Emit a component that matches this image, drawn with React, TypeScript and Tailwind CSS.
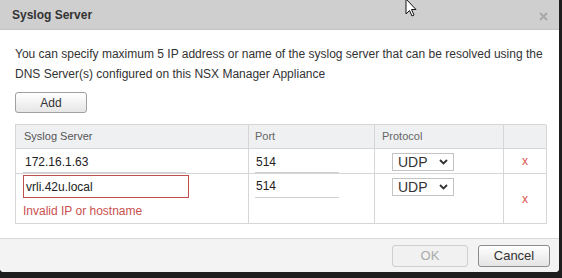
import React from 'react';

const font = { fontFamily: '"Liberation Sans", Arial, sans-serif' };

function Chevron() {
  return (
    <svg width="9" height="6" viewBox="0 0 9 6" className="shrink-0">
      <path d="M1 1 L4.5 4.5 L8 1" fill="none" stroke="#333" strokeWidth="1.8" />
    </svg>
  );
}

function ProtocolSelect({ className = '' }: { className?: string }) {
  return (
    <div
      className={`w-[62px] h-[18px] border border-[#c4c4c4] bg-white flex items-center justify-between pl-[5px] pr-[5px] text-[14px] leading-none text-[#333] ${className}`}
    >
      <span>UDP</span>
      <Chevron />
    </div>
  );
}

function RemoveX() {
  return <span className="text-[12px] leading-none text-[#d9534f]">x</span>;
}

export default function App() {
  return (
    <div className="w-[562px] h-[278px] bg-[#1e1e1e] relative overflow-hidden" style={font}>
      <div className="w-[559px] h-[272px] bg-white flex flex-col rounded-b-[4px] overflow-hidden">
        {/* title bar */}
        <div className="h-[30px] shrink-0 bg-[#cfcfcf] border-b border-[#c4c4c4] flex items-center justify-between pl-[12px] pr-[11px]">
          <span className="text-[12px] font-bold text-[#333]">Syslog Server</span>
          <svg width="9" height="9" viewBox="0 0 9 9" className="mt-[3px]">
            <path d="M1 1 L8 8 M8 1 L1 8" stroke="#a8a8a8" strokeWidth="2" />
          </svg>
        </div>

        {/* body */}
        <div className="flex-1 px-[15px] pt-[14px] text-[12px] text-[#333]">
          <p className="leading-[20px]">
            You can specify maximum 5 IP address or name of the syslog server that can be resolved using the
            <br />
            DNS Server(s) configured on this NSX Manager Appliance
          </p>
          <button className="mt-[8px] w-[72px] h-[21px] rounded-[3px] border border-[#a0a0a0] bg-gradient-to-b from-white to-[#e6e6e6] text-[12px] text-[#333]">
            Add
          </button>

          <div className="mt-[11px] w-[531px] border-l border-t border-[#d6d6d6] grid grid-cols-[233px_126px_129px_43px]">
            {/* header */}
            <div className="h-[24px] bg-[#eef0f2] border-r border-b border-[#d6d6d6] flex items-center pl-[8px] text-[11px] text-[#555]">
              Syslog Server
            </div>
            <div className="h-[24px] bg-[#eef0f2] border-r border-b border-[#d6d6d6] flex items-center pl-[6px] text-[11px] text-[#666]">
              Port
            </div>
            <div className="h-[24px] bg-[#eef0f2] border-r border-b border-[#d6d6d6] flex items-center pl-[7px] text-[11px] text-[#666]">
              Protocol
            </div>
            <div className="h-[24px] bg-[#eef0f2] border-r border-b border-[#d6d6d6]" />

            {/* row 1 */}
            <div className="h-[25px] border-r border-b border-[#d6d6d6] pl-[7px] pt-[2px]">
              <div className="w-[163px] h-[22px] border-b border-[#cfcfcf] flex items-center pl-[2px] text-[12px] text-[#222]">
                172.16.1.63
              </div>
            </div>
            <div className="h-[25px] border-r border-b border-[#d6d6d6] pl-[6px] pt-[2px]">
              <div className="w-[84px] h-[22px] border-b border-[#cfcfcf] flex items-center pl-[1px] text-[12px] text-[#222]">
                514
              </div>
            </div>
            <div className="h-[25px] border-r border-b border-[#d6d6d6] pl-[17px] pt-[4px]">
              <ProtocolSelect />
            </div>
            <div className="h-[25px] border-r border-b border-[#d6d6d6] flex items-center justify-center">
              <RemoveX />
            </div>

            {/* row 2 */}
            <div className="h-[50px] border-r border-b border-[#d6d6d6] pl-[7px] pt-[1px]">
              <div className="w-[166px] h-[23px] border border-[#c0504d] flex items-center pl-[2px] text-[12px] text-[#222]">
                vrli.42u.local
              </div>
              <div className="mt-[5px] leading-[16px] text-[12px] text-[#c9514e]">Invalid IP or hostname</div>
            </div>
            <div className="h-[50px] border-r border-b border-[#d6d6d6] pl-[6px] pt-[1px]">
              <div className="w-[84px] h-[23px] border-b border-[#cfcfcf] flex items-center pl-[1px] text-[12px] text-[#222]">
                514
              </div>
            </div>
            <div className="h-[50px] border-r border-b border-[#d6d6d6] pl-[17px] pt-[4px]">
              <ProtocolSelect />
            </div>
            <div className="h-[50px] border-r border-b border-[#d6d6d6] flex items-center justify-center">
              <RemoveX />
            </div>
          </div>
        </div>

        {/* footer */}
        <div className="h-[34px] shrink-0 bg-[#f3f3f3] border-t border-[#d8d8d8] flex items-start justify-end gap-[10px] pr-[9px] pt-[6px]">
          <button className="w-[76px] h-[22px] rounded-[3px] border border-[#cfcfcf] bg-[#f1f1f1] text-[13px] text-[#aaa]">
            OK
          </button>
          <button className="w-[72px] h-[22px] rounded-[3px] border border-[#8c8c8c] bg-gradient-to-b from-white to-[#e4e4e4] text-[13px] text-[#333]">
            Cancel
          </button>
        </div>
      </div>

      {/* mouse cursor */}
      <svg width="13" height="20" viewBox="0 0 13 20" className="absolute left-[405px] top-[-2px]">
        <path d="M1 1 L1 16 L4.5 12.5 L7 18 L9 17 L6.5 11.5 L11 11.5 Z" fill="white" stroke="#111" strokeWidth="1" strokeLinejoin="round" />
      </svg>
    </div>
  );
}
